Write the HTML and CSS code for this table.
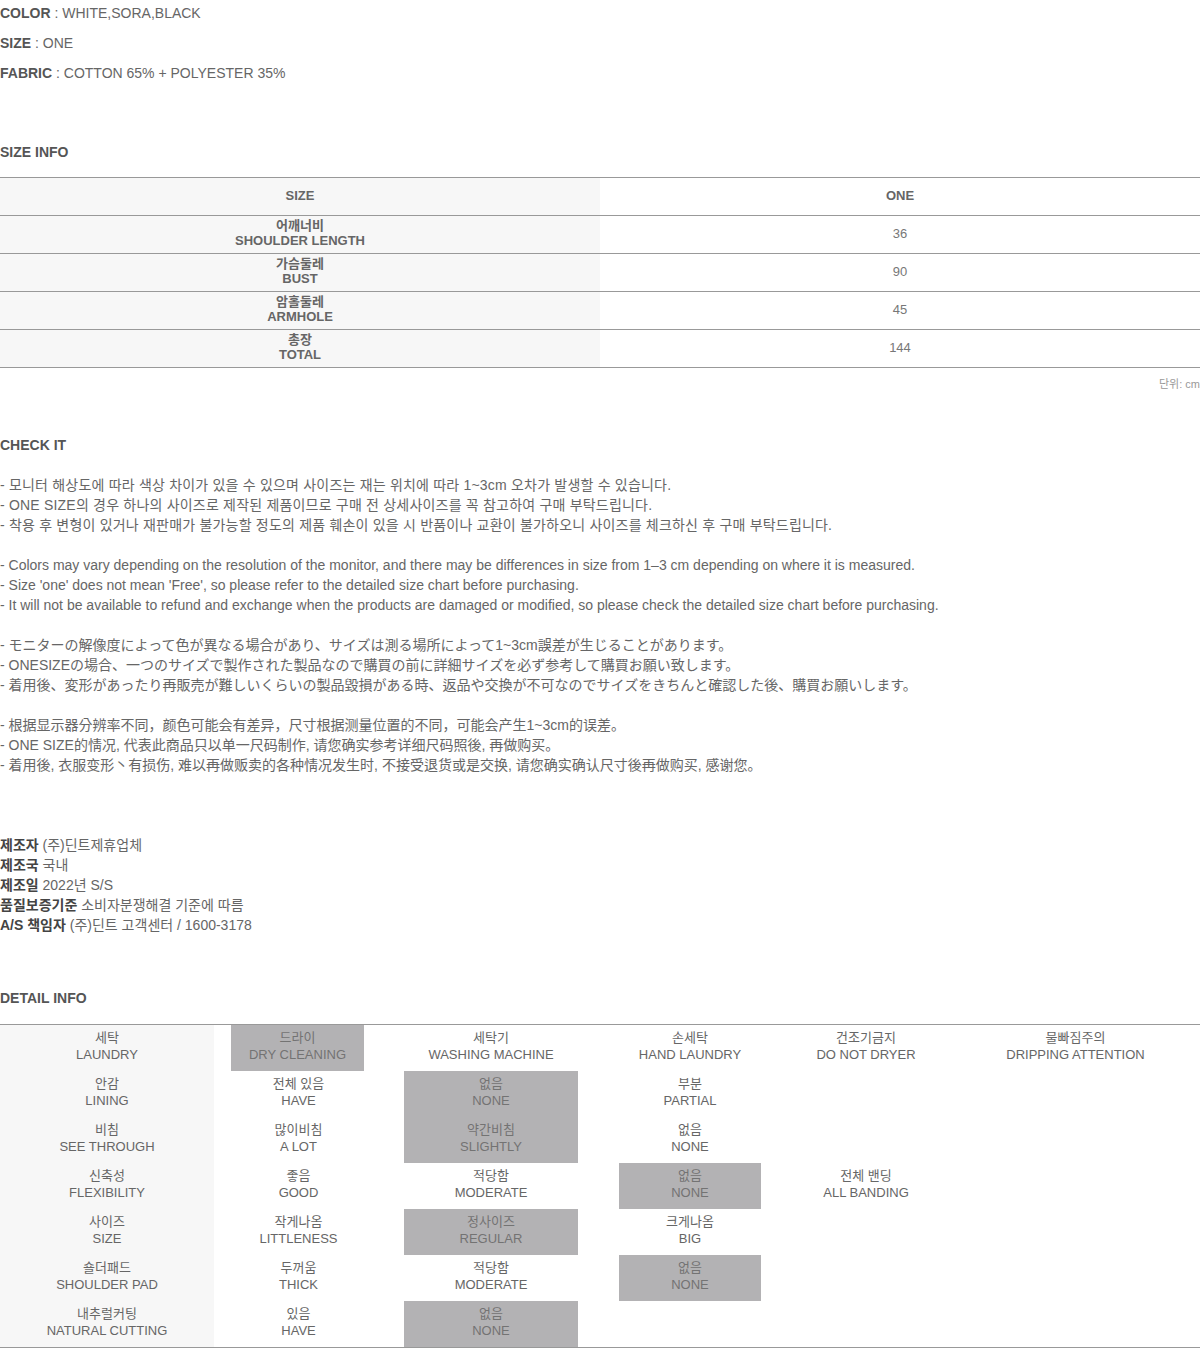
FILE: index.html
```html
<!DOCTYPE html>
<html lang="ko">
<head>
<meta charset="utf-8">
<title>Product info</title>
<link rel="stylesheet" href="styles.css">
</head>
<body>
<div class="page">
  <section class="basic">
    <p><b>COLOR</b> : WHITE,SORA,BLACK</p>
    <p><b>SIZE</b> : ONE</p>
    <p><b>FABRIC</b> : COTTON 65% + POLYESTER 35%</p>
  </section>

  <h2 class="title size-title">SIZE INFO</h2>
  <div class="size-table">
    <div class="srow head"><div class="lab">SIZE</div><div class="val">ONE</div></div>
    <div class="srow"><div class="lab">어깨너비<br>SHOULDER LENGTH</div><div class="val">36</div></div>
    <div class="srow"><div class="lab">가슴둘레<br>BUST</div><div class="val">90</div></div>
    <div class="srow"><div class="lab">암홀둘레<br>ARMHOLE</div><div class="val">45</div></div>
    <div class="srow"><div class="lab">총장<br>TOTAL</div><div class="val">144</div></div>
  </div>
  <div class="unit">단위: cm</div>

  <h2 class="title check-title">CHECK IT</h2>
  <div class="check">
    <p class="kr">- 모니터 해상도에 따라 색상 차이가 있을 수 있으며 사이즈는 재는 위치에 따라 1~3cm 오차가 발생할 수 있습니다.<br>
    - ONE SIZE의 경우 하나의 사이즈로 제작된 제품이므로 구매 전 상세사이즈를 꼭 참고하여 구매 부탁드립니다.<br>
    - 착용 후 변형이 있거나 재판매가 불가능할 정도의 제품 훼손이 있을 시 반품이나 교환이 불가하오니 사이즈를 체크하신 후 구매 부탁드립니다.</p>
    <p>- Colors may vary depending on the resolution of the monitor, and there may be differences in size from 1–3 cm depending on where it is measured.<br>
    - Size 'one' does not mean 'Free', so please refer to the detailed size chart before purchasing.<br>
    - It will not be available to refund and exchange when the products are damaged or modified, so please check the detailed size chart before purchasing.</p>
    <p class="jp">- モニターの解像度によって色が異なる場合があり、サイズは測る場所によって1~3cm誤差が生じることがあります。<br>
    - ONESIZEの場合、一つのサイズで製作された製品なので購買の前に詳細サイズを必ず参考して購買お願い致します。<br>
    - 着用後、変形があったり再販売が難しいくらいの製品毀損がある時、返品や交換が不可なのでサイズをきちんと確認した後、購買お願いします。</p>
    <p class="cn">- 根据显示器分辨率不同，颜色可能会有差异，尺寸根据测量位置的不同，可能会产生1~3cm的误差。<br>
    - ONE SIZE的情况, 代表此商品只以单一尺码制作, 请您确实参考详细尺码照後, 再做购买。<br>
    - 着用後, 衣服变形丶有损伤, 难以再做贩卖的各种情况发生时, 不接受退货或是交换, 请您确实确认尺寸後再做购买, 感谢您。</p>
  </div>

  <div class="maker">
    <p><b>제조자</b> (주)딘트제휴업체</p>
    <p><b>제조국</b> 국내</p>
    <p><b>제조일</b> 2022년 S/S</p>
    <p><b>품질보증기준</b> 소비자분쟁해결 기준에 따름</p>
    <p><b>A/S 책임자</b> (주)딘트 고객센터 / 1600-3178</p>
  </div>

  <h2 class="title detail-title">DETAIL INFO</h2>
  <div class="detail">
    <div class="c1"><span>세탁<br>LAUNDRY</span></div>
    <div class="c2"><span class="on">드라이<br>DRY CLEANING</span></div>
    <div class="c3"><span>세탁기<br>WASHING MACHINE</span></div>
    <div class="c4"><span>손세탁<br>HAND LAUNDRY</span></div>
    <div class="c5"><span>건조기금지<br>DO NOT DRYER</span></div>
    <div class="c6"><span>물빠짐주의<br>DRIPPING ATTENTION</span></div>

    <div class="c1"><span>안감<br>LINING</span></div>
    <div class="c2"><span>전체 있음<br>HAVE</span></div>
    <div class="c3"><span class="on">없음<br>NONE</span></div>
    <div class="c4"><span>부분<br>PARTIAL</span></div>
    <div class="c5"></div>
    <div class="c6"></div>

    <div class="c1"><span>비침<br>SEE THROUGH</span></div>
    <div class="c2"><span>많이비침<br>A LOT</span></div>
    <div class="c3"><span class="on">약간비침<br>SLIGHTLY</span></div>
    <div class="c4"><span>없음<br>NONE</span></div>
    <div class="c5"></div>
    <div class="c6"></div>

    <div class="c1"><span>신축성<br>FLEXIBILITY</span></div>
    <div class="c2"><span>좋음<br>GOOD</span></div>
    <div class="c3"><span>적당함<br>MODERATE</span></div>
    <div class="c4"><span class="on">없음<br>NONE</span></div>
    <div class="c5"><span>전체 밴딩<br>ALL BANDING</span></div>
    <div class="c6"></div>

    <div class="c1"><span>사이즈<br>SIZE</span></div>
    <div class="c2"><span>작게나옴<br>LITTLENESS</span></div>
    <div class="c3"><span class="on">정사이즈<br>REGULAR</span></div>
    <div class="c4"><span>크게나옴<br>BIG</span></div>
    <div class="c5"></div>
    <div class="c6"></div>

    <div class="c1"><span>숄더패드<br>SHOULDER PAD</span></div>
    <div class="c2"><span>두꺼움<br>THICK</span></div>
    <div class="c3"><span>적당함<br>MODERATE</span></div>
    <div class="c4"><span class="on">없음<br>NONE</span></div>
    <div class="c5"></div>
    <div class="c6"></div>

    <div class="c1"><span>내추럴커팅<br>NATURAL CUTTING</span></div>
    <div class="c2"><span>있음<br>HAVE</span></div>
    <div class="c3"><span class="on">없음<br>NONE</span></div>
    <div class="c4"></div>
    <div class="c5"></div>
    <div class="c6"></div>
  </div>
</div>
</body>
</html>
```

FILE: styles.css
```css
html, body {
  margin: 0;
  padding: 0;
  background: #fff;
}

.page {
  width: 1200px;
  font-family: "Liberation Sans", Arial, "Noto Sans CJK KR", sans-serif;
  font-size: 14px;
  color: #666;
}

p { margin: 0; }

.basic {
  display: flex;
  flex-direction: column;
  gap: 10px;
  padding-top: 3px;
}
.basic p { line-height: 20px; }
.basic b { color: #555; }

.title {
  margin: 0;
  font-size: 14px;
  font-weight: bold;
  line-height: 20px;
  color: #555;
}
.size-title { margin-top: 59px; }

.size-table {
  margin-top: 15px;
  border-top: 1px solid #999;
  font-size: 13px;
}
.srow {
  display: grid;
  grid-template-columns: 600px 600px;
  height: 37px;
  border-bottom: 1px solid #999;
}
.srow .lab {
  background: #f7f7f7;
  font-weight: bold;
  color: #666;
  line-height: 15px;
  display: flex;
  align-items: center;
  justify-content: center;
  text-align: center;
  padding-bottom: 3px;
}
.srow .val {
  display: flex;
  align-items: center;
  justify-content: center;
  color: #777;
  padding-bottom: 2px;
}
.srow.head .val { font-weight: bold; color: #666; }

.unit {
  text-align: right;
  font-size: 11px;
  color: #999;
  line-height: 14px;
  margin-top: 9px;
}

.check-title { margin-top: 44px; }

.check {
  margin-top: 20px;
  line-height: 20px;
}
.check p { margin-bottom: 20px; }
.check p.kr { letter-spacing: 0.2px; }
.check p.jp { font-family: "Liberation Sans", "Noto Sans CJK JP", sans-serif; }
.check p.cn { font-family: "Liberation Sans", "Noto Sans CJK SC", sans-serif; }

.maker {
  margin-top: 60px;
  line-height: 20px;
}
.maker b { color: #444; }

.detail-title { margin-top: 53px; }

.detail {
  margin-top: 16px;
  display: grid;
  grid-template-columns: 214px 169px 216px 182px 170px 249px;
  grid-auto-rows: 46px;
  border-top: 1px solid #999;
  border-bottom: 1px solid #999;
  font-size: 13px;
  color: #666;
}
.detail > div {
  display: flex;
  justify-content: center;
  text-align: center;
}
.detail span {
  display: block;
  line-height: 17px;
  padding-top: 4px;
  height: 42px;
}
.detail .c1 { background: #f7f7f7; }
.detail span.on {
  background: #b3b2b4;
  color: #737373;
}
.detail .c2 { justify-content: flex-start; }
.detail .c2 span { width: 169px; }
.detail .c2 span.on { margin-left: 17px; width: 133px; }
.detail .c3 span.on { width: 174px; }
.detail .c4 span.on { width: 142px; }
```
